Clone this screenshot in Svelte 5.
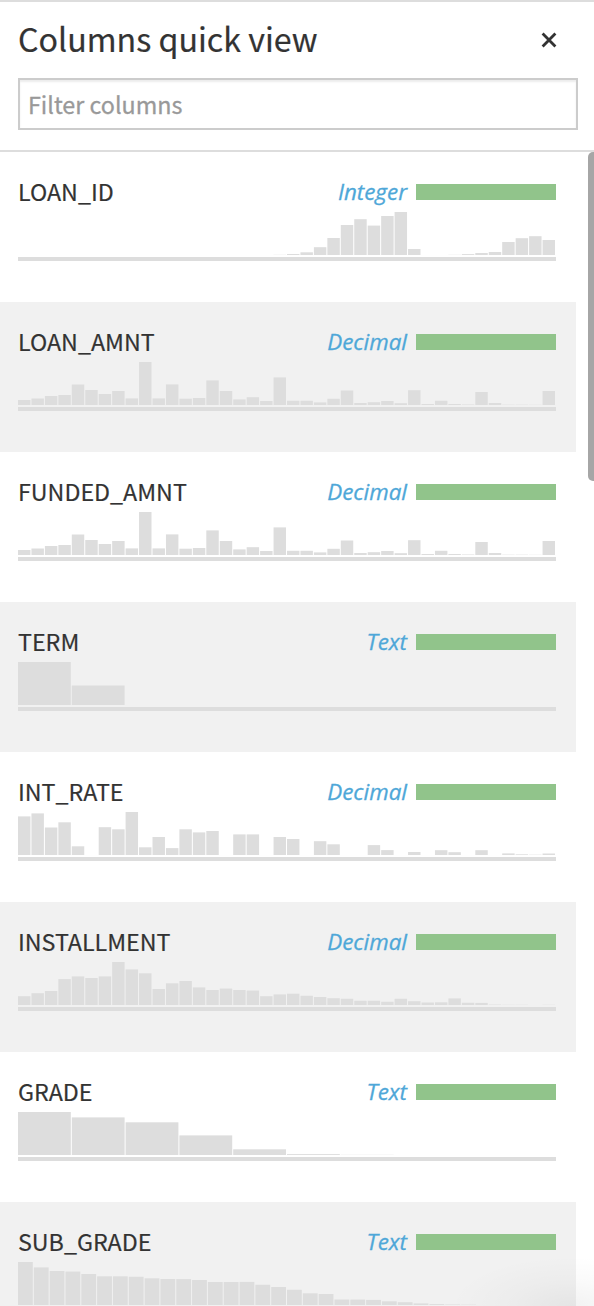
<script>
  const loanAmounts = [5, 6.5, 9, 10, 20.5, 15, 11, 14, 6.6, 43, 6.6, 20.6, 6.3, 7, 24.6, 14, 5.6, 7.8, 4, 27.6, 4.2, 4.2, 2.6, 6.2, 14.5, 2, 2.8, 4, 1.8, 14.8, 1, 4.2, 1, 0.5, 13, 2, 0.3, 0.3, 0.2, 14];

  const columns = [
    { name: 'LOAN_ID', type: 'Integer', slots: 40, bars: [0, 0, 0, 0, 0, 0, 0, 0, 0, 0, 0, 0, 0, 0, 0, 0, 0, 0, 0, 0.2, 1, 2.7, 7.8, 17, 30, 35.8, 29.4, 39, 43, 6, 0, 0, 0.2, 0.9, 2, 3, 13, 16.8, 18.8, 15] },
    { name: 'LOAN_AMNT', type: 'Decimal', slots: 40, bars: loanAmounts },
    { name: 'FUNDED_AMNT', type: 'Decimal', slots: 40, bars: loanAmounts },
    { name: 'TERM', type: 'Text', slots: 10, bars: [43, 19.5] },
    { name: 'INT_RATE', type: 'Decimal', slots: 40, bars: [38.6, 41.6, 27.5, 32.7, 8.7, 0, 27.8, 25.7, 43, 7.7, 18, 6.9, 25.7, 22.6, 24, 0, 20.6, 20.6, 0, 18, 16, 0, 13.8, 10.7, 0, 0, 9.9, 4.9, 0, 3, 0, 4.8, 2.8, 0, 4.8, 0, 1.6, 0.7, 0.3, 1.5] },
    { name: 'INSTALLMENT', type: 'Decimal', slots: 40, bars: [8.8, 11.8, 14, 25.9, 28.6, 27, 28.6, 43, 35.6, 31.7, 16, 21.7, 24, 17.6, 15, 16.4, 15, 14.4, 8.8, 10.6, 11.3, 9.2, 8, 6.8, 6.2, 4.2, 4.2, 3.2, 6.2, 3.8, 2.5, 2.7, 6.6, 2.2, 2.1, 0.4, 0.2, 0.2, 0, 0.2] },
    { name: 'GRADE', type: 'Text', slots: 10, bars: [43, 37.6, 32.7, 19.6, 5.7, 0.9, 0.2] },
    { name: 'SUB_GRADE', type: 'Text', slots: 34, bars: [43, 37.6, 34, 33.4, 31, 28.7, 28.7, 28.2, 26.7, 26, 25.9, 25, 23, 23, 23.1, 20.2, 18, 15.2, 11.7, 11, 5.5, 5.4, 5.1, 3.7, 2.8, 1.6, 0.9, 0.5, 0.3] }
  ];
</script>

<div class="panel">
  <header>
    <div class="heading">
      <h1>Columns quick view</h1>
      <button aria-label="Close">
        <svg width="16" height="16" viewBox="0 0 16 16"><path d="M1.6 1.6 14.4 14.4M14.4 1.6 1.6 14.4" /></svg>
      </button>
    </div>
    <input type="text" placeholder="Filter columns" />
  </header>

  <div class="body">
    <ul>
      {#each columns as column}
        <li>
          <div class="info">
            <span class="name">{column.name}</span>
            <span class="type">{column.type}</span>
            <span class="quality"></span>
          </div>
          <svg class="chart" width="538" height="43">
            {#each column.bars as h, i}
              <rect x={(i * 538) / column.slots} y={43 - h} width={538 / column.slots - 1} height={h} />
            {/each}
          </svg>
          <div class="baseline"></div>
        </li>
      {/each}
    </ul>
    <div class="thumb"></div>
  </div>
  <div class="shade"></div>
</div>

<style>
  :global(body) {
    background: #fff;
    overflow: hidden;
  }
  .panel {
    position: relative;
    box-sizing: border-box;
    display: flex;
    flex-direction: column;
    width: 594px;
    height: 1306px;
    overflow: hidden;
    border-top: 2px solid #ddd;
    background: #fff;
    color: #333;
    font-family: 'Noto Sans CJK SC', 'Open Sans', sans-serif;
    -webkit-text-stroke: 0.2px;
  }
  header {
    box-sizing: border-box;
    flex: none;
    height: 150px;
    padding: 14px 16px 0 18px;
    border-bottom: 2px solid #ddd;
  }
  .heading {
    display: flex;
    align-items: center;
    justify-content: space-between;
    height: 48px;
    margin-bottom: 14px;
    padding-right: 21px;
  }
  h1 {
    margin: 0;
    padding-bottom: 4px;
    font-size: 32.2px;
    font-weight: 400;
    line-height: 44px;
  }
  button {
    display: flex;
    padding: 0;
    border: 0;
    background: none;
  }
  button path {
    fill: none;
    stroke: #333;
    stroke-width: 2.8;
  }
  input {
    box-sizing: border-box;
    display: block;
    width: 560px;
    height: 52px;
    padding: 0 8px;
    border: 2px solid #ccc;
    border-radius: 0;
    outline: 0;
    background: #fff;
    box-shadow: inset 0 2px 2px rgba(0, 0, 0, 0.075);
    color: #333;
    font: 23.3px 'Noto Sans CJK SC', 'Open Sans', sans-serif;
    -webkit-text-stroke: 0.3px;
  }
  input::placeholder {
    color: #999;
    opacity: 1;
  }
  .body {
    display: flex;
    justify-content: space-between;
    flex: 1;
    min-height: 0;
    overflow: hidden;
  }
  ul {
    width: 576px;
    margin: 0;
    padding: 0;
    list-style: none;
  }
  li {
    box-sizing: border-box;
    height: 150px;
    padding: 20px 20px 0 18px;
  }
  li:nth-child(even) {
    background: #f1f1f1;
  }
  .info {
    display: flex;
    align-items: center;
    height: 40px;
    font-size: 23.25px;
    line-height: 38px;
  }
  .name {
    flex: 1;
    padding-bottom: 2px;
  }
  .type {
    color: #4ea7d8;
    font-family: 'Open Sans', sans-serif;
    font-size: 22.4px;
    font-style: italic;
    -webkit-text-stroke: 0.3px;
  }
  .quality {
    width: 140px;
    height: 16px;
    margin-left: 9px;
    background: #91c48b;
  }
  .chart {
    display: block;
    fill: #ddd;
  }
  .baseline {
    height: 4px;
    margin-top: 2px;
    background: #ddd;
  }
  .thumb {
    width: 6px;
    height: 329px;
    border-radius: 5px 0 0 5px;
    background: #a6a6a6;
  }
  .shade {
    position: absolute;
    right: 0;
    bottom: 0;
    width: 160px;
    height: 60px;
    background: radial-gradient(ellipse 120px 50px at 85% 100%, rgba(0, 0, 0, 0.05), rgba(0, 0, 0, 0.02) 50%, transparent);
    pointer-events: none;
  }
</style>
